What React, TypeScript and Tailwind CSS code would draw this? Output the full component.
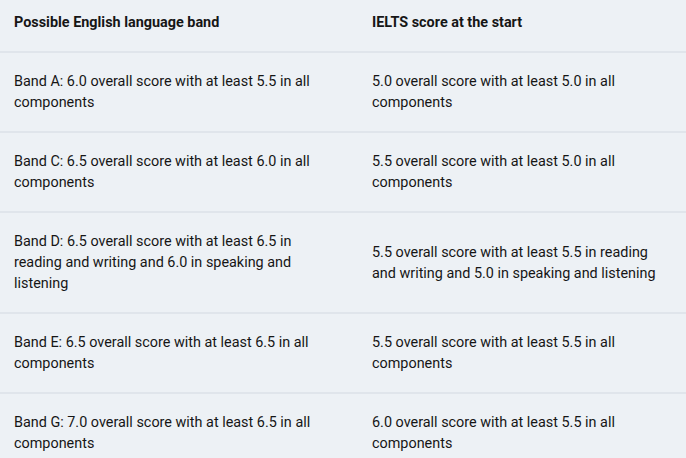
export default function App() {
  const rows: [string, string][] = [
    ["Band A: 6.0 overall score with at least 5.5 in all components", "5.0 overall score with at least 5.0 in all components"],
    ["Band C: 6.5 overall score with at least 6.0 in all components", "5.5 overall score with at least 5.0 in all components"],
    ["Band D: 6.5 overall score with at least 6.5 in reading and writing and 6.0 in speaking and listening", "5.5 overall score with at least 5.5 in reading and writing and 5.0 in speaking and listening"],
    ["Band E: 6.5 overall score with at least 6.5 in all components", "5.5 overall score with at least 5.5 in all components"],
    ["Band G: 7.0 overall score with at least 6.5 in all components", "6.0 overall score with at least 5.5 in all components"],
  ];
  return (
    <div className="w-[686px] h-[458px] overflow-hidden bg-[#edf1f5] text-[#161616] text-[14.4px] leading-[21px]" style={{ fontFamily: "Roboto, 'Liberation Sans', sans-serif" }}>
      <div className="grid grid-cols-[358px_1fr] border-b-2 border-[#e0e5eb] font-bold">
        <div className="pl-[14px] pr-[24px] pt-[12px] pb-[18px]">Possible English language band</div>
        <div className="pl-[14px] pr-[14px] pt-[12px] pb-[18px]">IELTS score at the start</div>
      </div>
      {rows.map((r, i) => (
        <div key={i} className="grid grid-cols-[358px_1fr] items-center border-b-2 border-[#e0e5eb]">
          <div className="pl-[14px] pr-[24px] py-[18px]">{r[0]}</div>
          <div className="pl-[14px] pr-[14px] py-[18px]">{r[1]}</div>
        </div>
      ))}
    </div>
  );
}
